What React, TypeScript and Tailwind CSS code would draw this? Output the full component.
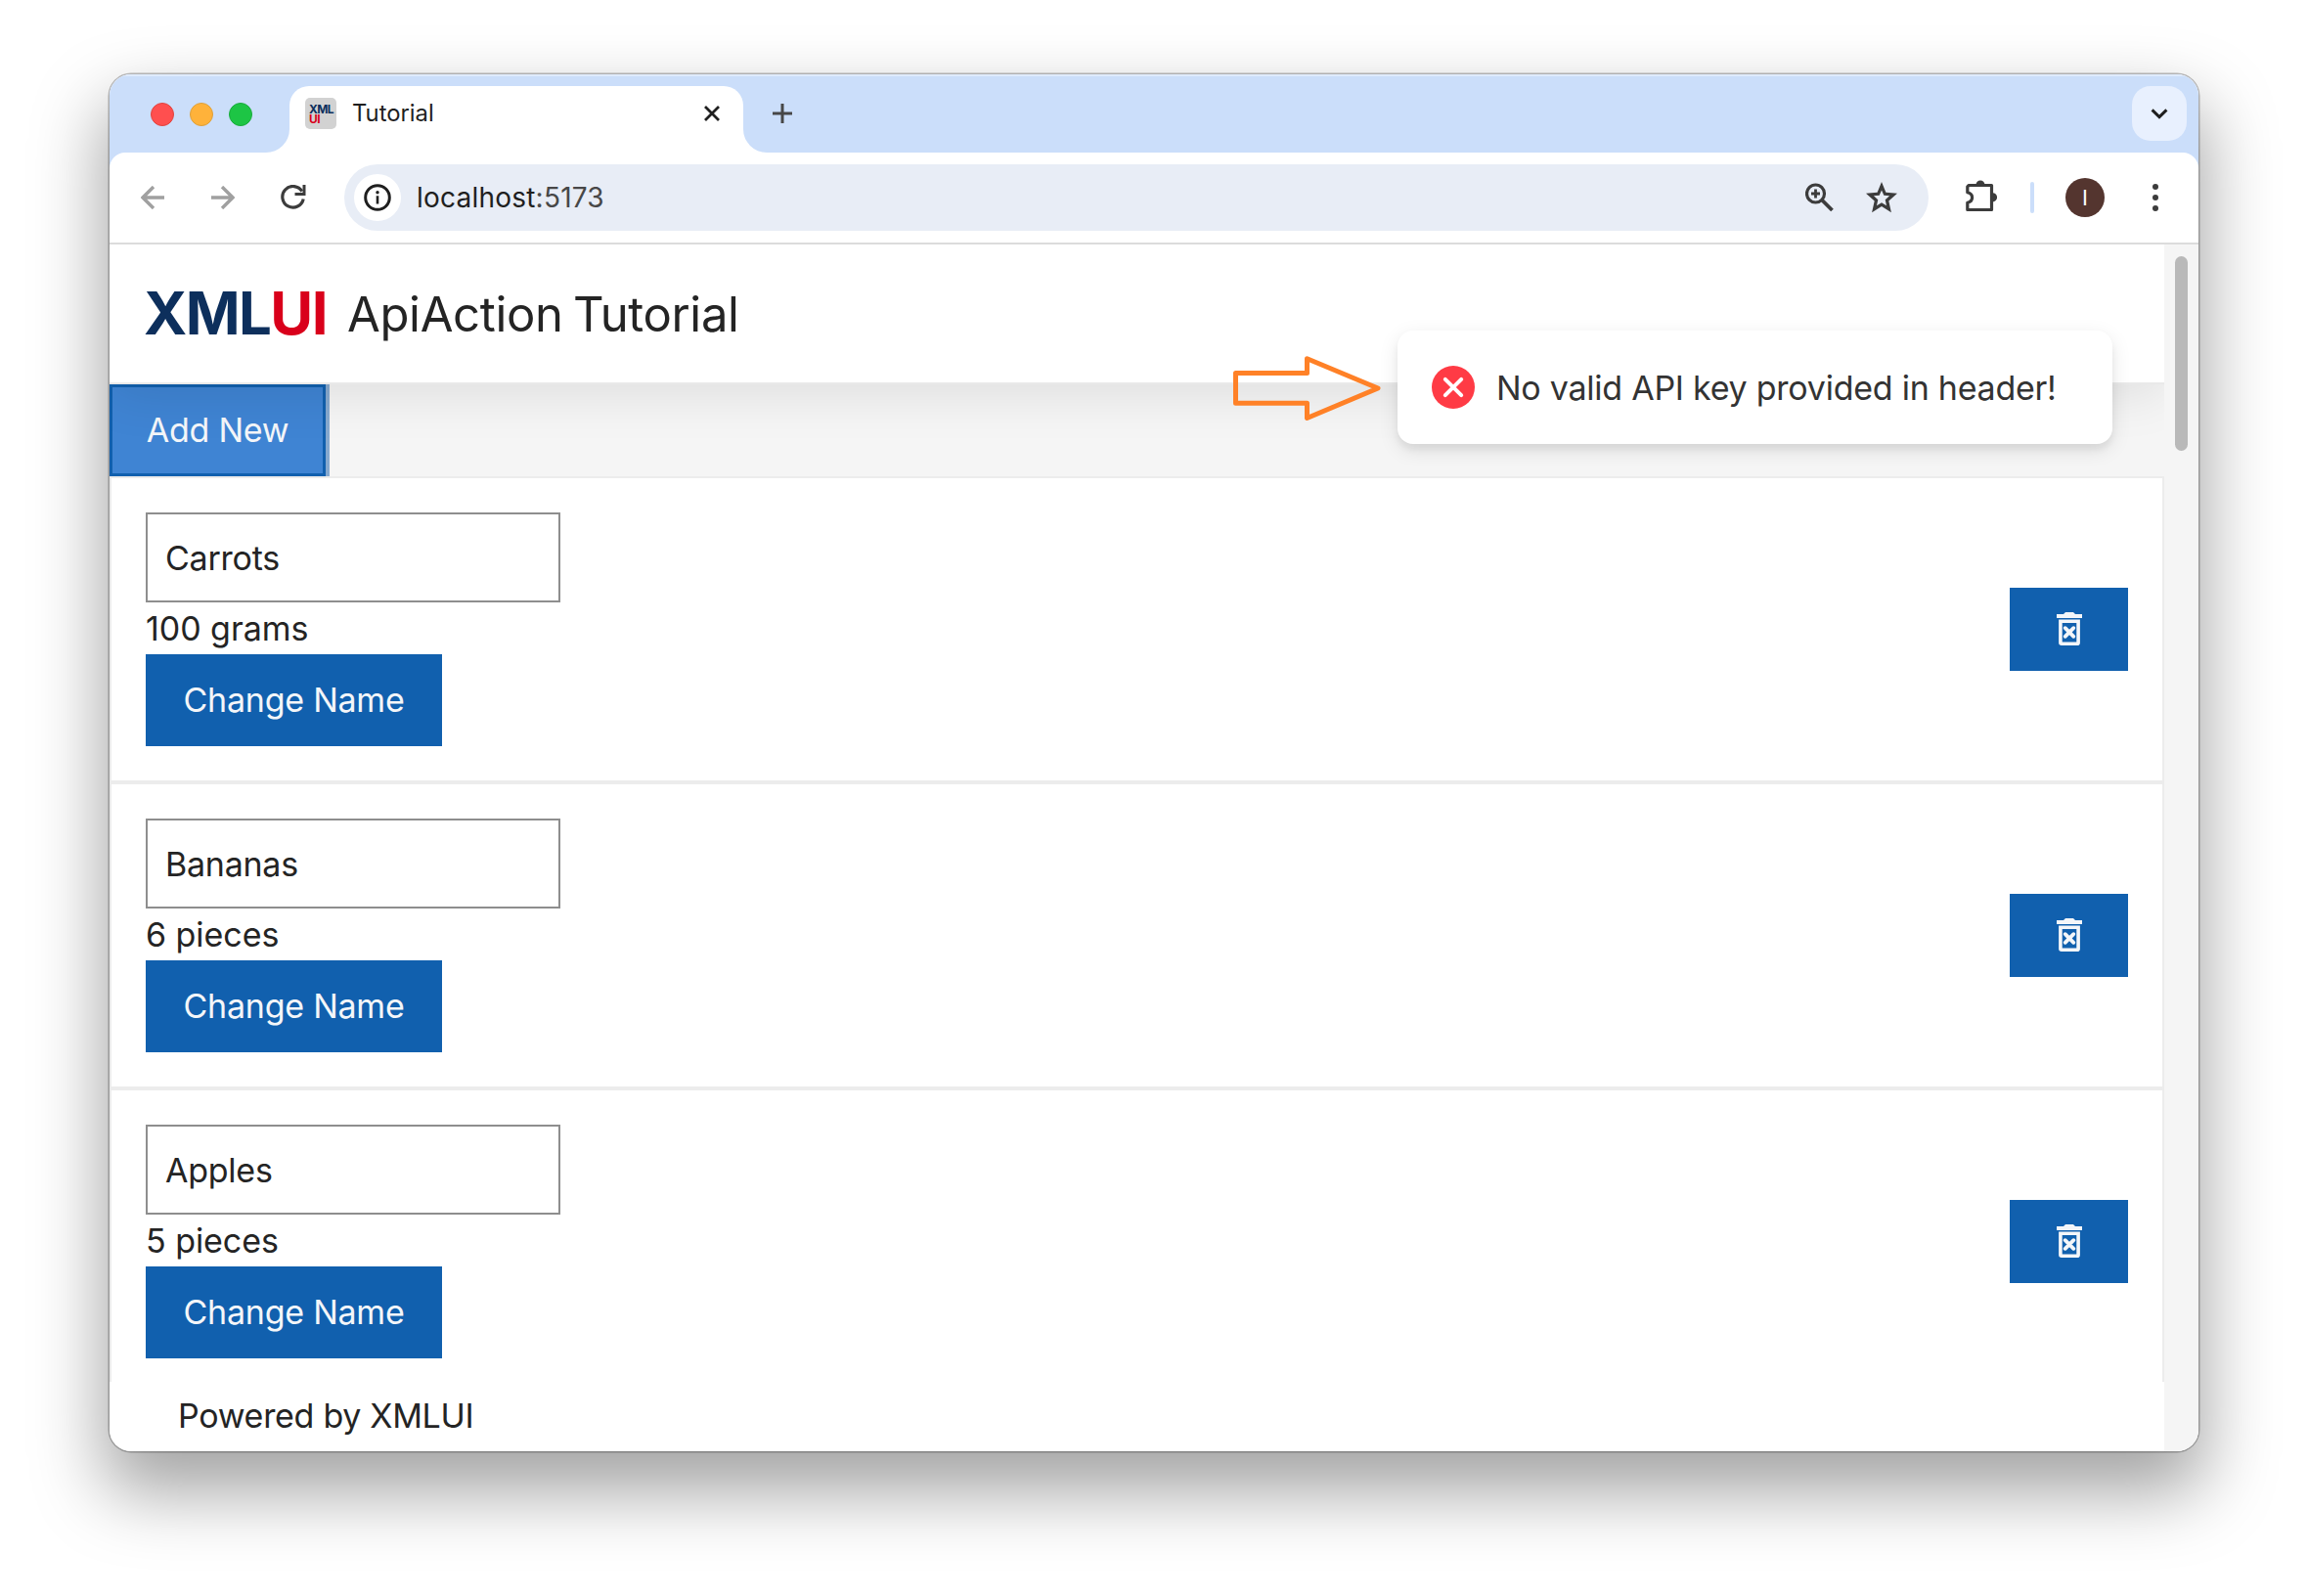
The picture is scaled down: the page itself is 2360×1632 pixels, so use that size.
import React from "react";

const items = [
  { name: "Carrots", amount: "100 grams" },
  { name: "Bananas", amount: "6 pieces" },
  { name: "Apples", amount: "5 pieces" },
];

function TabStrip() {
  return (
    <div className="flex h-20 shrink-0 items-end bg-[#cbdefa] shadow-[inset_0_2px_0_#dfebfc]">
      <div className="flex h-20 w-40 shrink-0 items-center gap-4 pl-[42px] pt-[2px]">
        <span className="size-6 shrink-0 rounded-full border border-[#e0443e] bg-[#ff4f4f]" />
        <span className="size-6 shrink-0 rounded-full border border-[#dea03a] bg-[#ffb23a]" />
        <span className="size-6 shrink-0 rounded-full border border-[#1aab3c] bg-[#1dc545]" />
      </div>
      <svg className="size-6 shrink-0" viewBox="0 0 24 24">
        <path d="M24 0V24H0A24 24 0 0 0 24 0Z" fill="#fff" />
      </svg>
      <div className="flex h-[68px] w-[464px] shrink-0 items-start rounded-t-[20px] bg-white pl-4 pt-3">
        <div className="flex size-8 shrink-0 flex-col rounded-[5px] bg-[#d2d2d2] pt-[7px] pl-1 text-[12px] leading-[9.5px] font-bold">
          <span className="tracking-[-0.6px] text-[#0d2f5c]">XML</span>
          <span className="tracking-[-0.6px] text-[#d9001b]">UI</span>
        </div>
        <span className="ml-4 w-[350px] shrink-0 text-[23.8px] leading-8 text-[#1f1f1f]">Tutorial</span>
        <svg className="mt-[7px] ml-[9px] size-[18px] shrink-0" viewBox="0 0 18 18">
          <path d="M2 2L16 16M16 2L2 16" stroke="#1f1f1f" strokeWidth="2.8" />
        </svg>
      </div>
      <svg className="size-6 shrink-0" viewBox="0 0 24 24">
        <path d="M0 0V24H24A24 24 0 0 1 0 0Z" fill="#fff" />
      </svg>
      <svg className="mb-[30px] ml-[6px] size-5 shrink-0" viewBox="0 0 20 20">
        <path d="M10 0V20M0 10H20" stroke="#474747" strokeWidth="3" />
      </svg>
      <div className="mr-3 mb-3 ml-auto flex size-14 items-center justify-center rounded-[19px] bg-[#e8f0fe]">
        <svg className="h-[11px] w-[18px]" viewBox="0 0 18 11">
          <path d="M1.6 1.4L9 8.6L16.4 1.4" fill="none" stroke="#1f1f1f" strokeWidth="3" />
        </svg>
      </div>
    </div>
  );
}

function Toolbar() {
  return (
    <div className="shrink-0 bg-[#cbdefa]">
      <div className="flex h-[94px] items-center rounded-t-[16px] border-b-2 border-[#dcdcdc] bg-white">
        <svg className="ml-8 size-6 shrink-0" viewBox="0 0 24 24" fill="none" stroke="#a0a0a0" strokeWidth="3.4">
          <path d="M24 12H2M13 1L2 12L13 23" />
        </svg>
        <svg className="ml-12 size-6 shrink-0" viewBox="0 0 24 24" fill="none" stroke="#a0a0a0" strokeWidth="3.4">
          <path d="M0 12H22M11 1L22 12L11 23" />
        </svg>
        <svg className="ml-[47px] h-[26px] w-[26px] shrink-0" viewBox="0 0 26 26" fill="none" stroke="#3c3c3c" strokeWidth="3.2">
          <path d="M21.8 6.6A10.8 10.8 0 1 0 23.2 14.5" />
          <path d="M25.5 0V11H14.5V8H22.5V0Z" fill="#3c3c3c" stroke="none" />
        </svg>
        <div className="ml-[39px] flex h-[68px] w-[1620px] shrink-0 items-center rounded-full bg-[#e8edf6] pl-[10px]">
          <span className="flex size-12 items-center justify-center rounded-full bg-white">
            <svg className="size-7" viewBox="0 0 28 28">
              <circle cx="14" cy="14" r="12.3" fill="none" stroke="#1f1f1f" strokeWidth="3" />
              <path d="M14 12.2V20.5" stroke="#1f1f1f" strokeWidth="2.6" />
              <circle cx="14" cy="8.8" r="1.7" fill="#1f1f1f" />
            </svg>
          </span>
          <span className="ml-4 text-[28px] tracking-[0.22px] text-[#1f1f1f]">
            localhost<span className="text-[#474747]">:5173</span>
          </span>
          <svg className="mr-[33px] ml-auto h-[30px] w-[29px]" viewBox="0 0 29 30" fill="none" stroke="#3c3c3c">
            <circle cx="10.5" cy="11" r="9" strokeWidth="3.2" />
            <path d="M17 17.5L27.5 28" strokeWidth="3.8" />
            <path d="M10.5 6.5V15.5M6 11H15" strokeWidth="2.8" />
          </svg>
          <svg className="mr-8 size-8" viewBox="0 0 32 32">
            <path
              fillRule="evenodd"
              fill="#3c3c3c"
              d="M16 0L20.4 10.8L32 11.8L23.3 19.6L25.9 31.2L16 25.1L6.1 31.2L8.7 19.6L0 11.8L11.6 10.8ZM16 8.4L13.7 13.8L7.9 14.3L12.3 18.3L11 24.2L16 21.2L21 24.2L19.7 18.3L24.1 14.3L18.3 13.8Z"
            />
          </svg>
        </div>
        <svg className="mb-1 ml-[37px] h-[34px] w-[35px] shrink-0" viewBox="0 0 35 34">
          <path
            d="M4.2 6.5H27.5V31.5H2.8V24.2C6 23.4 7.6 21.3 7.6 18.9S6 14.5 2.8 13.7V7.8Z"
            fill="none"
            stroke="#3c3c3c"
            strokeWidth="3.2"
            strokeLinejoin="round"
          />
          <path d="M11.5 6A4.5 4.5 0 0 1 20.5 6ZM28.5 14.2A4.6 4.6 0 0 1 28.5 23.4Z" fill="#3c3c3c" />
        </svg>
        <span className="ml-[32px] h-8 w-1 shrink-0 rounded-full bg-[#cbdefa]" />
        <span className="ml-8 flex size-10 shrink-0 items-center justify-center rounded-full bg-[#54352f] text-[22px] text-white">
          I
        </span>
        <svg className="ml-[49px] h-7 w-[6px] shrink-0" viewBox="0 0 6 28" fill="#3c3c3c">
          <circle cx="3" cy="3" r="3" />
          <circle cx="3" cy="14" r="3" />
          <circle cx="3" cy="25" r="3" />
        </svg>
      </div>
    </div>
  );
}

function TrashIcon() {
  return (
    <svg className="mb-px h-[34px] w-[26px]" viewBox="0 0 26 34" fill="none" stroke="#f4f6f9">
      <path d="M0 2H7L9 0H17L19 2H26V6H0Z" fill="#f4f6f9" stroke="none" />
      <path d="M3.9 9.3H22.1V31.2Q22.1 32.2 21.1 32.2H4.9Q3.9 32.2 3.9 31.2Z" strokeWidth="3.6" />
      <path d="M8.7 16.2L17.3 24.8M17.3 16.2L8.7 24.8" strokeWidth="3.8" strokeLinecap="round" />
    </svg>
  );
}

function ListItem({ name, amount }: { name: string; amount: string }) {
  return (
    <div className="flex h-[313px] shrink-0 items-center justify-between border-b-4 border-[#ececec] pr-[35px] pl-[35px]">
      <div className="flex flex-col items-start">
        <div className="flex h-[92px] w-[424px] items-center border-2 border-[#8e8e8e] bg-white pl-[18px]">{name}</div>
        <div className="h-[53px] leading-[54px] tracking-[-0.05px]">{amount}</div>
        <button className="flex h-[94px] w-[303px] items-center justify-center bg-[#1160ae] pb-[2px] text-[#f4f6f9]">
          Change Name
        </button>
      </div>
      <button className="flex h-[85px] w-[121px] items-center justify-center bg-[#1160ae]">
        <TrashIcon />
      </button>
    </div>
  );
}

function Toast() {
  return (
    <div className="absolute top-[262px] left-[1317px] z-20 flex h-[116px] w-[731px] items-center rounded-[16px] bg-white pl-[35px] shadow-[0_6px_20px_rgba(0,0,0,0.10),0_6px_6px_rgba(0,0,0,0.05)]">
      <svg className="size-11 shrink-0" viewBox="0 0 44 44">
        <circle cx="22" cy="22" r="22" fill="#ff3b45" />
        <path d="M13.8 13.8L30.2 30.2M30.2 13.8L13.8 30.2" stroke="#fff" strokeWidth="4" strokeLinecap="round" />
      </svg>
      <span className="ml-[22px] text-[34px] tracking-[-0.25px] whitespace-nowrap text-[#333333]">
        No valid API key provided in header!
      </span>
    </div>
  );
}

function Pointer() {
  return (
    <svg className="absolute top-[286px] left-[1147px] z-20 h-[70px] w-[156px]" viewBox="0 0 156 70">
      <path
        d="M4.5 19.5H77.5V4.8L150 35L77.5 65.5V50.3H4.5Z"
        fill="none"
        stroke="#ff8127"
        strokeWidth="5"
        strokeLinejoin="round"
      />
    </svg>
  );
}

export default function App() {
  return (
    <div className="h-[1632px] w-[2360px] overflow-hidden bg-white px-28 pt-[76px] font-['Inter',sans-serif]">
      <div className="relative h-[1408px] w-[2136px] rounded-[22px] shadow-[0_0_0_1.5px_rgba(0,0,0,0.25),0_36px_72px_6px_rgba(0,0,0,0.36)]">
        <div className="flex h-full flex-col overflow-hidden rounded-[22px] bg-white">
          <TabStrip />
          <Toolbar />
          <div className="flex min-h-0 flex-1 text-[34px] tracking-[-0.25px] text-[#242424]">
            <main className="flex w-[2101px] shrink-0 flex-col overflow-hidden">
              <header className="relative z-10 flex h-[143px] shrink-0 items-center border-b-2 border-[#e9e9e9] bg-white pl-[35px] shadow-[0_8px_54px_rgba(0,0,0,0.1)]">
                <span className="w-[208px] shrink-0 pb-[2px] text-[60px] font-bold tracking-[-1.6px] text-[#0d2f5c]">
                  XML<span className="text-[#d9001b]">UI</span>
                </span>
                <h1 className="pt-[3px] text-[49px] tracking-[-0.35px] [word-spacing:-3px]">ApiAction Tutorial</h1>
              </header>
              <div className="flex h-[96px] shrink-0 border-b-2 border-[#ececec] bg-[#f5f5f5]">
                <div className="border-r-4 border-[#86a9cf]">
                  <button className="flex h-[94px] w-[221px] items-center justify-center border-[3px] border-[#1160ae] bg-[#3f84d3] pb-[2px] text-[#f4f6f9]">
                    Add New
                  </button>
                </div>
              </div>
              <div className="relative z-20 h-[924px] shrink-0 overflow-hidden border-x-2 border-[#ececec] bg-white">
                {items.map((item) => (
                  <ListItem key={item.name} {...item} />
                ))}
              </div>
              <footer className="flex-1 pl-[70px] leading-[70px] tracking-[-0.3px]">Powered by XMLUI</footer>
            </main>
            <div className="flex-1 bg-[#f5f5f5] pt-3 pl-[11px]">
              <div className="h-[199px] w-[13px] rounded-full bg-[#b9b9b9]" />
            </div>
          </div>
        </div>
        <Pointer />
        <Toast />
      </div>
    </div>
  );
}
